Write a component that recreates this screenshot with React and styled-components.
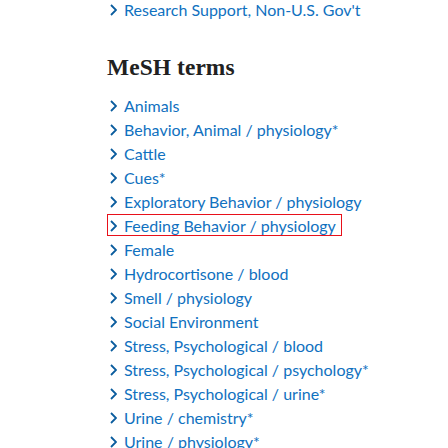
import React from "react";
import styled, { createGlobalStyle } from "styled-components";

const Global = createGlobalStyle`
  html, body { margin: 0; padding: 0; background: #fff; }
  body { font-family: Lato, "Open Sans", sans-serif; overflow: hidden; }
`;

const Page = styled.div`
  width: 448px;
  height: 448px;
  overflow: hidden;
  padding-left: 107px;
  box-sizing: border-box;
`;

const List = styled.ul`
  list-style: none;
  margin: ${(p) => p.$top || "0"} 0 0 0;
  padding: 0;
`;

const Item = styled.li`
  height: 24px;
  display: flex;
  align-items: flex-start;
`;

const Link = styled.a`
  display: inline-flex;
  align-items: center;
  height: 22px;
  box-sizing: border-box;
  padding: 1px 5px 0 2px;
  border: 1px solid ${(p) => (p.$active ? "#e8101a" : "transparent")};
  color: #1071c0;
  font-size: 16px;
  line-height: 20px;
  text-decoration: none;
  white-space: nowrap;
`;

const Chevron = styled.svg`
  width: 7px;
  height: 12px;
  margin-right: 7px;
  flex: none;
`;

const Heading = styled.h2`
  margin: 31px 0 0 0;
  height: 41px;
  font-family: "Liberation Serif", "Times New Roman", serif;
  font-weight: 700;
  font-size: 23.4px;
  line-height: 28px;
  color: #212121;
  letter-spacing: 0.1px;
`;

const Arrow = () => (
  <Chevron viewBox="0 0 7 12">
    <path d="M1 1 L6 6 L1 11" fill="none" stroke="#0a5c9e" strokeWidth="1.8" />
  </Chevron>
);

const terms = [
  "Animals",
  "Behavior, Animal / physiology*",
  "Cattle",
  "Cues*",
  "Exploratory Behavior / physiology",
  "Feeding Behavior / physiology",
  "Female",
  "Hydrocortisone / blood",
  "Smell / physiology",
  "Social Environment",
  "Stress, Psychological / blood",
  "Stress, Psychological / psychology*",
  "Stress, Psychological / urine*",
  "Urine / chemistry*",
  "Urine / physiology*",
];

export default function App() {
  return (
    <>
      <Global />
      <Page>
        <List $top="-2px">
          <Item>
            <Link href="#">
              <Arrow />
              Research Support, Non-U.S. Gov't
            </Link>
          </Item>
        </List>
        <Heading>MeSH terms</Heading>
        <List>
          {terms.map((t) => (
            <Item key={t}>
              <Link href="#" $active={t === "Feeding Behavior / physiology"}>
                <Arrow />
                {t}
              </Link>
            </Item>
          ))}
        </List>
      </Page>
    </>
  );
}
